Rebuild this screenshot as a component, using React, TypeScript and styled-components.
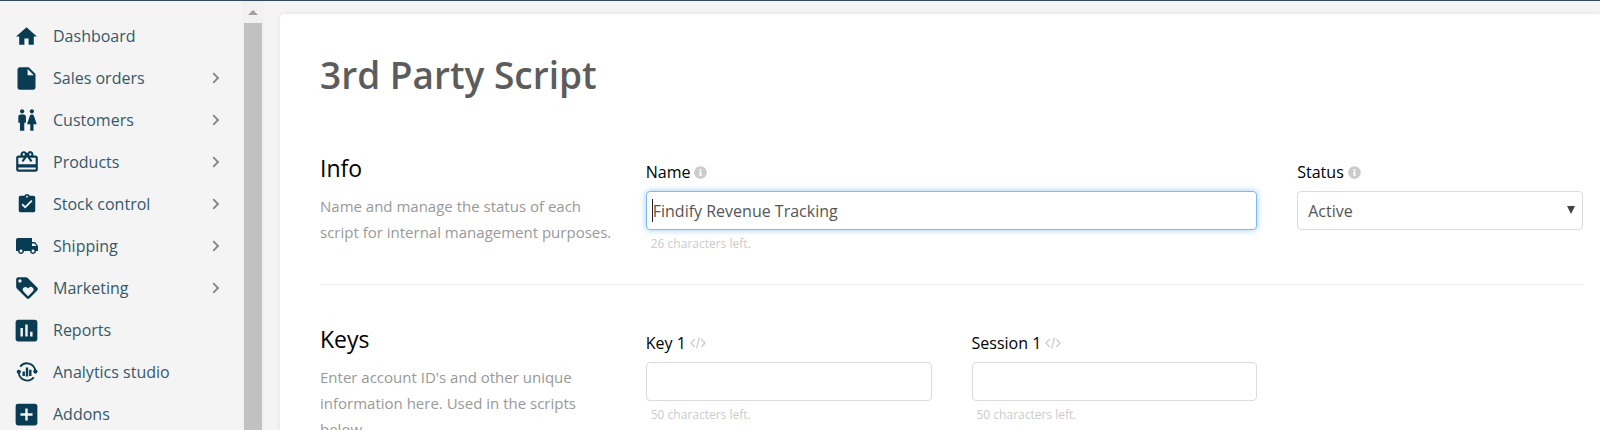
import React, { useState } from "react";
import styled, { createGlobalStyle } from "styled-components";
import type { IconType } from "react-icons";
import {
  MdAddBox,
  MdAssessment,
  MdAssignmentTurnedIn,
  MdCardGiftcard,
  MdHome,
  MdInsertDriveFile,
  MdLocalShipping,
  MdLoyalty,
  MdWc,
} from "react-icons/md";
import { FaInfoCircle } from "react-icons/fa";

const GlobalStyle = createGlobalStyle`
  * { box-sizing: border-box; }
  html, body, #root { height: 100%; }
  body {
    margin: 0;
    overflow: hidden;
    background: #f4f4f4;
    font-family: "Segoe UI", "Open Sans", "Noto Sans", sans-serif;
    font-size: 16px;
    color: #000;
  }
`;

const Page = styled.div`
  display: flex;
  height: 100%;
  border-top: 1px solid #34495e;
  overflow: hidden;
`;

const Sidebar = styled.nav`
  flex: 0 0 242px;
  padding-top: 14px;
`;

const NavList = styled.ul`
  margin: 0;
  padding: 0;
  list-style: none;
`;

const NavLink = styled.a`
  display: flex;
  align-items: center;
  height: 42px;
  padding: 0 22px 0 12px;
  color: #35596a;
  font-size: 16px;
  text-decoration: none;
`;

const IconSlot = styled.span`
  display: flex;
  flex: 0 0 29px;
  align-items: center;
  justify-content: center;
  margin-right: 12px;
  color: #093c52;
`;

const NavLabel = styled.span`
  flex: 1;
`;

const Scrollbar = styled.div`
  display: flex;
  flex: 0 0 22px;
  flex-direction: column;
  align-items: center;
  background: #f1f1f1;
`;

const ScrollArrow = styled.div`
  display: flex;
  align-items: center;
  justify-content: center;
  height: 22px;
`;

const ScrollThumb = styled.div`
  flex: 1;
  width: 18px;
  background: #c1c1c1;
`;

const Main = styled.main`
  flex: 1;
  min-width: 0;
  padding: 13px 0 0 16px;
`;

const Card = styled.div`
  min-height: 100%;
  padding: 32px 17px 40px 40px;
  border-radius: 4px 0 0 0;
  background: #fff;
  box-shadow: 0 0 5px rgba(0, 0, 0, 0.08);
`;

const Title = styled.h1`
  margin: 0 0 48px;
  color: #5c5c5c;
  font-size: 37px;
  font-weight: 600;
  line-height: 58px;
`;

const Section = styled.section`
  display: grid;
  grid-template-columns: repeat(4, minmax(0, 1fr));
  column-gap: 40px;
  padding-bottom: 30px;

  & + & {
    padding-top: 38px;
    border-top: 1px solid #ececec;
  }
`;

const SectionTitle = styled.h2`
  margin: 0 0 9px;
  font-size: 23px;
  font-weight: 500;
  line-height: 32px;
`;

const SectionText = styled.p`
  margin: 0 -16px 0 0;
  color: #999;
  font-size: 15px;
  line-height: 26px;
`;

const Field = styled.div<{ $span?: number }>`
  grid-column: span ${(p) => p.$span ?? 1};
  padding-top: 7px;
`;

const LabelRow = styled.div`
  display: flex;
  align-items: center;
  gap: 4px;
  margin-bottom: 6px;
  line-height: 26px;
  color: #ccc;
`;

const Label = styled.label`
  color: #000;
  font-size: 16px;
  font-weight: 500;
`;

const ControlBox = styled.div`
  position: relative;
`;

const TextInput = styled.input<{ $active?: boolean }>`
  display: block;
  width: 100%;
  height: 39px;
  padding: 0 6px;
  border: 1px solid ${(p) => (p.$active ? "#7dbcf0" : "#dcdcdc")};
  border-radius: 4px;
  outline: none;
  background: #fff;
  box-shadow: ${(p) => (p.$active ? "0 0 6px rgba(82, 168, 236, 0.6)" : "none")};
  color: #555;
  font: inherit;
`;

const Caret = styled.span`
  position: absolute;
  top: 8px;
  left: 6px;
  width: 1px;
  height: 23px;
  background: #222;
`;

const SelectInput = styled.select`
  display: block;
  width: 100%;
  height: 39px;
  padding: 0 10px;
  border: 1px solid #dcdcdc;
  border-radius: 4px;
  appearance: none;
  background: #fff;
  color: #555;
  font: inherit;
`;

const SelectArrow = styled.svg`
  position: absolute;
  top: 15px;
  right: 8px;
  pointer-events: none;
`;

const Hint = styled.div`
  margin-top: 4px;
  padding-left: 5px;
  color: #ccc;
  font-size: 12px;
  line-height: 20px;
`;

type IconProps = { size?: number };

const AnalyticsIcon = ({ size = 22 }: IconProps) => (
  <svg width={size} height={size} viewBox="0 0 22 22" fill="none" stroke="currentColor">
    <path d="M4.2 5.6A8.4 8.4 0 0 1 19.2 9.6M17.8 16.2A8.4 8.4 0 0 1 2.8 12.2" strokeWidth="1.8" />
    <circle cx="2.8" cy="10.8" r="2.1" fill="currentColor" stroke="none" />
    <circle cx="19.4" cy="10.6" r="2.1" fill="currentColor" stroke="none" />
    <path d="M7.7 15V10.5M11 15.6V6.5M14.3 15V8.8" strokeWidth="2.4" />
  </svg>
);

const ChevronIcon = () => (
  <svg width="8" height="12" viewBox="0 0 8 12" fill="none" stroke="#858585" strokeWidth="1.8">
    <path d="M1.2 1.2L6 6L1.2 10.8" />
  </svg>
);

const CodeIcon = () => (
  <svg width="16" height="12" viewBox="0 0 16 12" fill="none" stroke="currentColor" strokeWidth="1.3">
    <path d="M4.8 2L1 6L4.8 10M11.2 2L15 6L11.2 10M9.4 0.6L6.6 11.4" />
  </svg>
);

type NavItem = {
  label: string;
  icon: IconType | typeof AnalyticsIcon;
  size: number;
  expandable?: boolean;
};

const navItems: NavItem[] = [
  { label: "Dashboard", icon: MdHome, size: 25 },
  { label: "Sales orders", icon: MdInsertDriveFile, size: 27, expandable: true },
  { label: "Customers", icon: MdWc, size: 26, expandable: true },
  { label: "Products", icon: MdCardGiftcard, size: 26, expandable: true },
  { label: "Stock control", icon: MdAssignmentTurnedIn, size: 22, expandable: true },
  { label: "Shipping", icon: MdLocalShipping, size: 24, expandable: true },
  { label: "Marketing", icon: MdLoyalty, size: 26, expandable: true },
  { label: "Reports", icon: MdAssessment, size: 29 },
  { label: "Analytics studio", icon: AnalyticsIcon, size: 22 },
  { label: "Addons", icon: MdAddBox, size: 29 },
];

type TextFieldProps = {
  id: string;
  label: string;
  icon: React.ReactNode;
  initial?: string;
  limit: number;
  span?: number;
  active?: boolean;
};

const TextField = ({ id, label, icon, initial = "", limit, span, active }: TextFieldProps) => {
  const [value, setValue] = useState(initial);
  return (
    <Field $span={span}>
      <LabelRow>
        <Label htmlFor={id}>{label}</Label>
        {icon}
      </LabelRow>
      <ControlBox>
        <TextInput
          id={id}
          type="text"
          maxLength={limit}
          value={value}
          $active={active}
          onChange={(e) => setValue(e.target.value)}
        />
        {active && <Caret />}
      </ControlBox>
      <Hint>{limit - value.length} characters left.</Hint>
    </Field>
  );
};

export default function App() {
  return (
    <>
      <GlobalStyle />
      <Page>
        <Sidebar>
          <NavList>
            {navItems.map(({ label, icon: Icon, size, expandable }) => (
              <li key={label}>
                <NavLink href="#">
                  <IconSlot>
                    <Icon size={size} />
                  </IconSlot>
                  <NavLabel>{label}</NavLabel>
                  {expandable && <ChevronIcon />}
                </NavLink>
              </li>
            ))}
          </NavList>
        </Sidebar>
        <Scrollbar>
          <ScrollArrow>
            <svg width="10" height="5" viewBox="0 0 10 5" fill="#a0a0a0">
              <path d="M0 5L5 0L10 5Z" />
            </svg>
          </ScrollArrow>
          <ScrollThumb />
        </Scrollbar>
        <Main>
          <Card>
            <Title>3rd Party Script</Title>
            <Section>
              <div>
                <SectionTitle>Info</SectionTitle>
                <SectionText>
                  Name and manage the status of each script for internal management purposes.
                </SectionText>
              </div>
              <TextField
                id="name"
                label="Name"
                icon={<FaInfoCircle size={13} />}
                initial="Findify Revenue Tracking"
                limit={50}
                span={2}
                active
              />
              <Field>
                <LabelRow>
                  <Label htmlFor="status">Status</Label>
                  <FaInfoCircle size={13} />
                </LabelRow>
                <ControlBox>
                  <SelectInput id="status" defaultValue="Active">
                    <option>Active</option>
                    <option>Inactive</option>
                  </SelectInput>
                  <SelectArrow width="8" height="8" viewBox="0 0 8 8" fill="#444">
                    <path d="M0 0H8L4 8Z" />
                  </SelectArrow>
                </ControlBox>
              </Field>
            </Section>
            <Section>
              <div>
                <SectionTitle>Keys</SectionTitle>
                <SectionText>
                  Enter account ID's and other unique information here. Used in the scripts below.
                </SectionText>
              </div>
              <TextField id="key-1" label="Key 1" icon={<CodeIcon />} limit={50} />
              <TextField id="session-1" label="Session 1" icon={<CodeIcon />} limit={50} />
            </Section>
          </Card>
        </Main>
      </Page>
    </>
  );
}
